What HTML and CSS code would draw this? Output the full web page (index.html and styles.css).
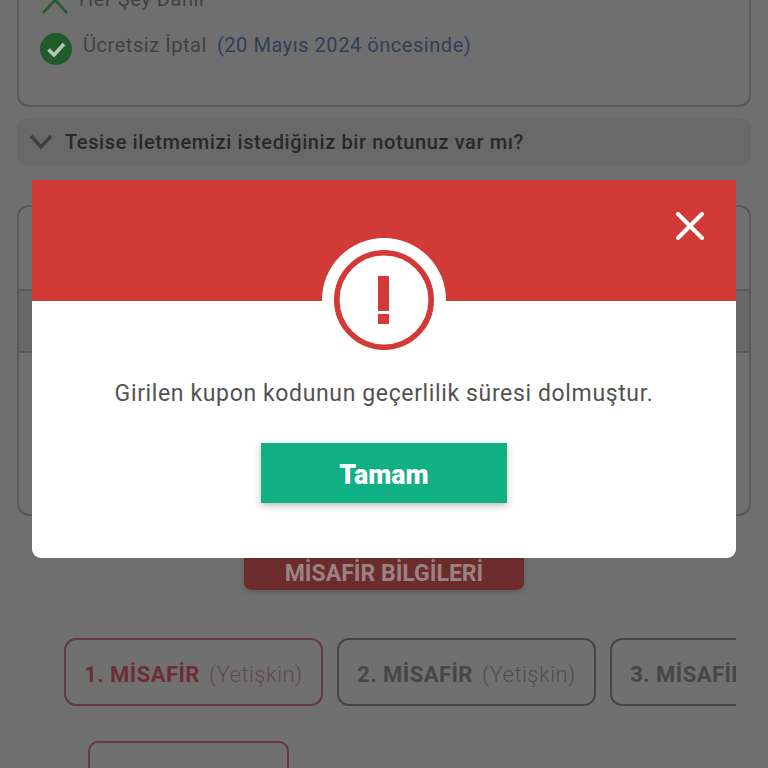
FILE: index.html
```html
<!DOCTYPE html>
<html lang="tr">
<head>
<meta charset="utf-8">
<title>Misafir Bilgileri</title>
<link rel="stylesheet" href="styles.css">
</head>
<body>
<main class="page">
  <section class="card summary">
    <div class="perk">
      <svg class="perk-icon" viewBox="0 0 32 32"><path d="M3 -2 L15 13 L3 26 M27 -2 L15 13 L27 26" fill="none" stroke="#285a2e" stroke-width="2.6"/></svg>
      <span class="perk-text perk-text-tight">Her Şey Dahil</span>
    </div>
    <div class="perk">
      <svg class="perk-icon" viewBox="0 0 32 32"><circle cx="16" cy="16" r="16" fill="#205b2a"/><path d="M8.5 16.5 L14 22 L24 11" fill="none" stroke="#b8c6ba" stroke-width="3.6"/></svg>
      <span class="perk-text">Ücretsiz İptal</span>
      <span class="perk-date">(20 Mayıs 2024 öncesinde)</span>
    </div>
  </section>

  <div class="note">
    <svg class="note-chevron" viewBox="0 0 24 16"><path d="M2 2 L12 13 L22 2" fill="none" stroke="#3d3f3d" stroke-width="3.4"/></svg>
    <span class="note-text">Tesise iletmemizi istediğiniz bir notunuz var mı?</span>
  </div>

  <section class="card prices">
    <div class="price-row price-top"></div>
    <div class="price-row price-mid"></div>
    <div class="price-row price-end"></div>
  </section>

  <section class="guests">
    <div class="guests-title">MİSAFİR BİLGİLERİ</div>
    <div class="tabs-clip">
      <div class="tabs">
        <div class="tab tab-active"><b>1. MİSAFİR</b><span>(Yetişkin)</span></div>
        <div class="tab"><b>2. MİSAFİR</b><span>(Yetişkin)</span></div>
        <div class="tab"><b>3. MİSAFİR</b><span>(Yetişkin)</span></div>
      </div>
    </div>
    <div class="field-box"></div>
  </section>
</main>

<div class="overlay">
  <div class="modal">
    <header class="modal-head">
      <button class="modal-close" type="button" aria-label="Kapat">
        <svg viewBox="0 0 28 28"><path d="M2 2 L26 26 M26 2 L2 26" fill="none" stroke="#fff" stroke-width="4" stroke-linecap="round"/></svg>
      </button>
      <div class="alert-badge">
        <svg viewBox="0 0 100 100"><circle cx="50" cy="50" r="47.2" fill="none" stroke="#d23a38" stroke-width="5.6"/><rect x="44" y="26" width="11" height="35" fill="#d23a38"/><rect x="44" y="64" width="11" height="10" fill="#d23a38"/></svg>
      </div>
    </header>
    <div class="modal-body">
      <p class="modal-text">Girilen kupon kodunun geçerlilik süresi dolmuştur.</p>
      <button class="modal-btn" type="button">Tamam</button>
    </div>
  </div>
</div>
</body>
</html>
```
FILE: styles.css
```css
* { box-sizing: border-box; }
html, body { margin: 0; height: 768px; overflow: hidden; background: #6f6f6f; }
body { font-family: Roboto, "Noto Sans", sans-serif; position: relative; }

.page { display: flex; flex-direction: column; margin-top: -30px; padding: 0 17px; }

.card { border: 2px solid #585858; border-radius: 12px; width: 734px; }

.summary { height: 137px; padding: 15px 0 0 21px; display: flex; flex-direction: column; gap: 14px; }
.perk { display: flex; align-items: center; height: 32px; font-size: 20px; letter-spacing: .55px; color: #404241; }
.perk-icon { width: 32px; height: 32px; margin-right: 11px; flex: none; overflow: visible; }
.perk-text { margin-bottom: 8px; }
.perk-text-tight { margin-left: -4px; }
.perk-date { margin: 0 0 8px 10px; color: #2f3f57; }

.note { margin-top: 11px; height: 47px; width: 734px; background: #686968; border-radius: 10px; display: flex; align-items: center; padding: 0 12px; }
.note-chevron { width: 24px; height: 16px; margin-right: 12px; flex: none; }
.note-text { font-size: 20px; font-weight: 500; letter-spacing: .6px; color: #272928; }

.prices { margin-top: 40px; height: 311px; display: flex; flex-direction: column; overflow: hidden; }
.price-row { border-bottom: 2px solid #5a5a5a; }
.price-top { height: 84px; background: #707070; }
.price-mid { height: 62px; background: #686868; }
.price-end { flex: 1; border-bottom: 0; }

.guests { margin: 70px 0 0 15px; width: 704px; height: 182px; position: relative; background: #707070; padding: 0 0 0 32px; display: flex; flex-direction: column; }
.guests-title { position: absolute; left: 212px; top: -46px; width: 280px; height: 50px; padding-top: 21px; text-align: center; background: #6c2c2c; border-radius: 0 0 8px 8px; color: #9a8282; font-size: 23px; font-weight: 700; line-height: 26px; box-shadow: 0 2px 5px rgba(0,0,0,.2); }
.tabs-clip { margin-top: 52px; overflow: hidden; flex: none; }
.tabs { display: flex; gap: 14px; width: 800px; }
.tab { width: 259px; height: 68px; padding-top: 5px; flex: none; border: 2px solid #464646; border-radius: 12px; display: flex; align-items: center; justify-content: center; gap: 9px; font-size: 22px; letter-spacing: .45px; color: #464646; }
.tab b { font-weight: 700; }
.tab span { font-weight: 300; color: #4e4e4e; }
.tab-active { border-color: #663a40; color: #6c2e33; }
.tab-active span { color: #604a4c; }
.field-box { width: 201px; height: 70px; margin: 35px 0 0 24px; border: 2px solid #663a40; border-radius: 10px; flex: none; }

.overlay { position: absolute; inset: 0; }
.modal { position: absolute; left: 32px; top: 180px; width: 704px; height: 378px; background: #fff; border-radius: 0 0 9px 9px; display: flex; flex-direction: column; }
.modal-head { height: 121px; background: #d23a38; position: relative; flex: none; }
.modal-close { position: absolute; left: 644px; top: 32px; width: 28px; height: 28px; padding: 0; background: none; border: 0; }
.modal-close svg { display: block; width: 28px; height: 28px; }
.alert-badge { position: absolute; left: 290px; top: 58px; width: 124px; height: 124px; padding: 12px; border-radius: 50%; background: #fff; }
.alert-badge svg { display: block; width: 100px; height: 100px; }

.modal-body { flex: 1; display: flex; flex-direction: column; align-items: center; }
.modal-text { margin: 78px 0 0; font-size: 23px; line-height: 30px; letter-spacing: .63px; color: #525252; white-space: nowrap; }
.modal-btn { margin-top: 34px; width: 246px; height: 60px; padding: 4px 0 0; background: #0fb083; border: 0; color: #fff; font: 900 26.8px/1 Roboto, sans-serif; box-shadow: 0 3px 7px rgba(0,0,0,.25); }
```
